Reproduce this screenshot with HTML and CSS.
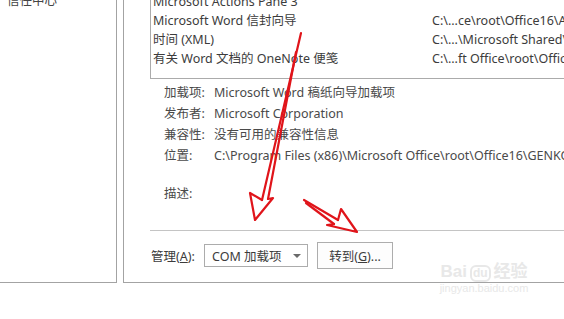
FILE: index.html
```html
<!DOCTYPE html>
<html lang="zh-CN">
<head>
    <meta charset="UTF-8">
    <meta name="viewport" content="width=device-width, initial-scale=1.0">
    <title>加载项</title>
    <link rel="stylesheet" href="styles.css">
</head>
<body>
    <div class="dialog">
        <div class="nav-panel">
            <div class="nav-item">信任中心</div>
        </div>
        <div class="main-panel">
            <div class="addin-list">
                <div class="addin-row">
                    <span class="addin-name">Microsoft Actions Pane 3</span>
                    <span class="addin-path"></span>
                </div>
                <div class="addin-row">
                    <span class="addin-name">Microsoft Word 信封向导</span>
                    <span class="addin-path">C:\...ce\root\Office16\ADDINS\</span>
                </div>
                <div class="addin-row">
                    <span class="addin-name">时间 (XML)</span>
                    <span class="addin-path">C:\...\Microsoft Shared\Smart Tag\</span>
                </div>
                <div class="addin-row">
                    <span class="addin-name">有关 Word 文档的 OneNote 便笺</span>
                    <span class="addin-path">C:\...ft Office\root\Office16\ONBttnWD.dll</span>
                </div>
            </div>

            <div class="details">
                <div class="detail-row">
                    <span class="detail-label">加载项:</span>
                    <span class="detail-value">Microsoft Word 稿纸向导加载项</span>
                </div>
                <div class="detail-row">
                    <span class="detail-label">发布者:</span>
                    <span class="detail-value">Microsoft Corporation</span>
                </div>
                <div class="detail-row">
                    <span class="detail-label">兼容性:</span>
                    <span class="detail-value">没有可用的兼容性信息</span>
                </div>
                <div class="detail-row">
                    <span class="detail-label">位置:</span>
                    <span class="detail-value">C:\Program Files (x86)\Microsoft Office\root\Office16\GENKO\GENKO.DLL</span>
                </div>
                <div class="detail-row detail-desc">
                    <span class="detail-label">描述:</span>
                    <span class="detail-value"></span>
                </div>
            </div>

            <div class="separator"></div>

            <div class="manage-row">
                <span class="manage-label">管理(<u>A</u>):</span>
                <div class="manage-select">
                    <span>COM 加载项</span>
                    <span class="select-arrow"></span>
                </div>
                <button class="go-btn">转到(<u>G</u>)...</button>
            </div>
        </div>
    </div>

    <!-- annotation arrows drawn over the screenshot -->
    <svg class="arrows" width="564" height="319" viewBox="0 0 564 319" xmlns="http://www.w3.org/2000/svg">
        <g fill="none" stroke="#e0141a" stroke-width="2.2" stroke-linejoin="round" stroke-linecap="round">
            <path d="M301 33 L262 200"/>
            <path d="M296 52 L268 199"/>
            <path d="M262 200 L250 193 L255 220 L273 198 L268 199"/>
            <path d="M304 200 L338 220"/>
            <path d="M306 203 L334 224"/>
            <path d="M338 220 L341 209 L357 232 L327 225 L334 224"/>
        </g>
    </svg>

    <div class="watermark">
        <div class="wm-brand">Bai<span class="wm-du">du</span>经验</div>
        <div class="wm-url">jingyan.baidu.com</div>
    </div>
</body>
</html>
```

FILE: styles.css
```css
body {
    margin: 0;
    background-color: white;
    font-family: "Noto Sans", "Noto Sans CJK SC", sans-serif;
    font-size: 12.5px;
    color: #3c3c3c;
    width: 564px;
    height: 319px;
    overflow: hidden;
    position: relative;
}
.dialog {
    display: flex;
    gap: 6px;
    width: 720px;
    align-items: stretch;
}
.nav-panel {
    width: 116px;
    border-right: 1px solid #a3a3a3;
    border-bottom: 1px solid #a3a3a3;
}
.nav-item {
    margin-top: -7px;
    padding-left: 7px;
    line-height: 16px;
    color: #444;
}
.main-panel {
    flex: 1;
    border-left: 1px solid #a3a3a3;
    border-bottom: 1px solid #a3a3a3;
    padding: 0 0 13px 26px;
}
.addin-list {
    margin-top: -9px;
    border: 1px solid #ababab;
    border-right: none;
    padding: 0 0 10px 2px;
}
.addin-row {
    display: flex;
    height: 19px;
    line-height: 19px;
    white-space: nowrap;
}
.addin-name {
    width: 279px;
    flex-shrink: 0;
}
.addin-path {
    flex-shrink: 0;
}
.details {
    margin-top: 3px;
    padding-left: 14px;
}
.detail-row {
    display: flex;
    height: 21px;
    line-height: 21px;
    white-space: nowrap;
    color: #4a4a4a;
}
.detail-label {
    width: 50px;
    flex-shrink: 0;
}
.detail-desc {
    margin-top: 17px;
}
.separator {
    margin-top: 26px;
    height: 1px;
    background-color: #c4c4c4;
}
.manage-row {
    display: flex;
    align-items: center;
    margin-top: 11px;
    height: 27px;
}
.manage-label {
    width: 53px;
    padding-left: 1px;
    flex-shrink: 0;
}
.manage-select {
    display: flex;
    align-items: center;
    justify-content: space-between;
    box-sizing: border-box;
    width: 104px;
    height: 23px;
    border: 1px solid #acacac;
    padding: 0 6px 0 7px;
    background: white;
}
.select-arrow {
    width: 0;
    height: 0;
    border-left: 4px solid transparent;
    border-right: 4px solid transparent;
    border-top: 4px solid #6a6a6a;
}
.go-btn {
    margin-left: 9px;
    box-sizing: border-box;
    width: 76px;
    height: 27px;
    border: 1px solid #adadad;
    background: #fdfdfd;
    font-family: inherit;
    font-size: 12.5px;
    color: #3c3c3c;
    padding: 0;
}
.arrows {
    position: absolute;
    left: 0;
    top: 0;
    pointer-events: none;
}
.watermark {
    position: absolute;
    left: 424px;
    top: 262px;
    width: 120px;
    color: #e8e8e8;
    text-align: center;
    white-space: nowrap;
    pointer-events: none;
}
.wm-brand {
    font-family: "Liberation Sans", "Noto Sans CJK SC", sans-serif;
    font-size: 17px;
    font-weight: bold;
    line-height: 20px;
}
.wm-du {
    display: inline-block;
    border: 2px solid #e8e8e8;
    border-radius: 6px;
    padding: 0 1px;
    margin: 0 3px;
    font-size: 12px;
    line-height: 13px;
}
.wm-url {
    font-family: "Liberation Sans", sans-serif;
    font-size: 11px;
    line-height: 12px;
}
```
